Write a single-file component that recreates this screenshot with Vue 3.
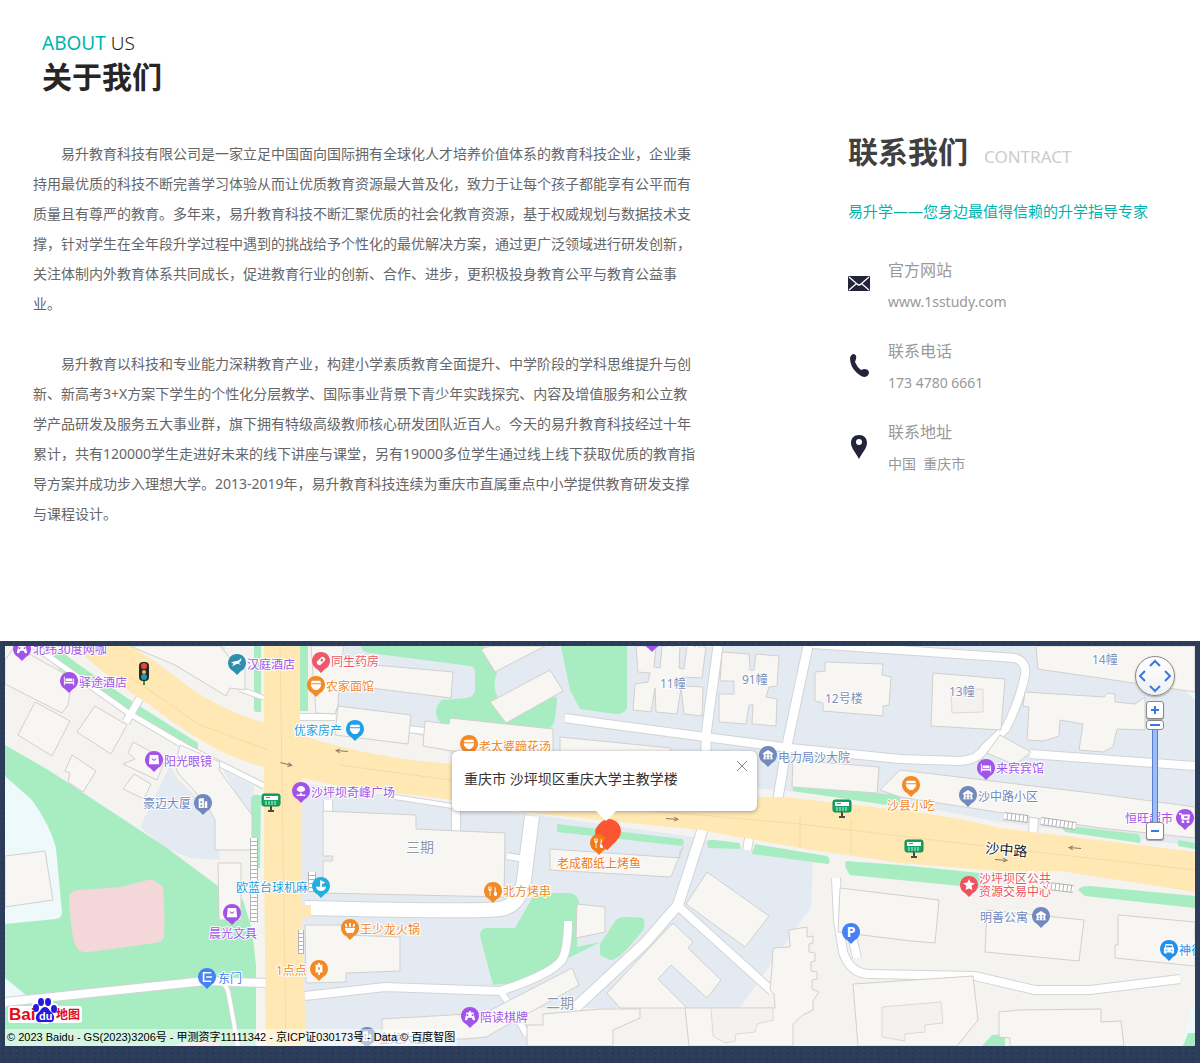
<script setup>
import { ref } from 'vue'

const zoom = ref(19)
const popupOpen = ref(true)

const contacts = [
  { icon: 'mail', label: '官方网站', value: 'www.1sstudy.com' },
  { icon: 'phone', label: '联系电话', value: '173 4780 6661' },
  { icon: 'pin', label: '联系地址', value: '中国\u00a0 重庆市' }
]

const plots = [
  'M345 646H1195V846L1100 834L1000 822L900 803L755 788H640L452 755L430 738L335 715Z',
  'M300 783L400 797L530 814L700 838L813 862L811 907L740 1008H527V1046H305L302 900Z',
  'M170 765L140 827L165 848L190 858L220 860L216 815L178 780ZM223 770L254 786V824Z',
  'M187 646H225V670L205 660Z'
]
const water = [
  'M5 777Q28 788 40 808Q55 830 56 848L62 912Q62 918 56 919L5 924Z',
  'M5 978L26 995V1008H5Z',
  'M1177 646H1195V700L1179 685ZM1195 1000Q1186 1022 1183 1046H1195Z'
]
const greens = [
  'M5 745L50 771L167 848L218 886L243 900L252 930L256 965V1046H5V1008L26 995L5 978V924L56 919Q62 918 62 912L56 848Q50 825 32 800L5 776Z',
  'M36 646H54L75 662L130 700L198 743V750L170 737L110 700L60 670Z',
  'M254 646H261V712H256Q253 711 254 705ZM251 798Q255 792 261 796L260 868H251ZM299 646H308V711H300Z',
  'M361 646Q362 652 370 653L470 666Q475 667 475 672V690Q474 697 466 698L442 700Q436 706 436 712Q436 724 450 725L550 728Q556 726 557 697L500 702Q493 690 495 680L497 672L484 655V646Z',
  'M561 646H627V708Q625 714 615 714L580 709L570 690Z',
  'M557 824L682 839Q686 843 682 846L557 832ZM707 842Q709 839 715 840L740 843V849L708 848ZM755 844L827 856Q832 860 828 864L752 854Z',
  'M793 787L900 795V807L793 791ZM1060 825L1138 834Q1142 838 1140 843L1065 832ZM1178 840L1195 843V849L1178 846Z',
  'M846 861L900 865L980 873V888L900 880L850 875Q843 866 846 861ZM1078 890Q1080 886 1090 886L1195 896V908L1085 896Z',
  'M480 936Q480 928 487 928H515L535 893H570Q578 895 579 902L577 947L600 942L565 960L515 983L493 985Z',
  'M600 944L616 920Q620 915 643 918Q646 924 643 930Q618 962 610 960L600 955Z',
  'M982 1046L992 1035L1005 1034V1046ZM1188 1033H1195V1046H1183Z'
]
const pinks = [
  'M69 897Q70 890 80 890L120 887L148 880Q152 879 156 882L163 887Q165 910 164 938Q162 942 155 943L90 952Q80 953 77 948Q71 940 69 897Z',
  'M170 1046Q190 1041 219 1041V1046Z'
]
const roads = [
  { d: 'M34 646L82 680L130 714L186 747L264 786', w: 5 },
  { d: 'M126 722L140 698', w: 7 },
  { d: 'M240 689L264 698', w: 4 },
  { d: 'M300 717H335M408 729L425 731', w: 6 },
  { d: 'M565 718L600 723L705 737L790 748L900 759L960 761Q978 760 985 748L1006 728Q1020 700 1025 675Q1027 662 1015 658L900 650L812 644', w: 8 },
  { d: 'M1030 754L1195 766', w: 8 },
  { d: 'M718 646L706 735V760', w: 9 },
  { d: 'M808 646L787 745L778 798', w: 9 },
  { d: 'M328 800V812M456 803V835', w: 8 },
  { d: 'M395 797L452 806', w: 4 },
  { d: 'M532 816L524 880Q520 906 500 909Q480 912 305 908', w: 14 },
  { d: 'M507 856L530 860', w: 6 },
  { d: 'M703 828L678 905L645 943L575 1008', w: 10 },
  { d: 'M678 906L772 991', w: 8 },
  { d: 'M305 996L385 987L500 991Q550 975 562 960Q568 948 568 921', w: 8 },
  { d: 'M500 991L510 1005L527 1035', w: 6 },
  { d: 'M836 878L838 920L843 952Q850 974 870 974L975 976L1035 990H1090L1180 979', w: 8 },
  { d: 'M853 940L857 958', w: 8 },
  { d: 'M5 1002L205 981L266 983', w: 8 },
  { d: 'M223 983Q228 988 229 996L238 1046', w: 4 },
  { d: 'M751 828L747 850M1034 815L1031 873', w: 8 }
]
const highways = [
  'M73 646Q110 680 150 705Q215 756 265 767V723Q225 712 190 688Q155 660 130 646Z',
  'M264 646H300V735Q370 758 452 764L600 790L757 797H785L900 810Q950 816 1000 828L1195 852V892L1060 871H1000L900 863L800 848L700 830L522 812L452 800L340 786L302 778V905H311V917H302L306 1046H266L264 860Z'
]
const laneLines = 'M280 646L286 1046M340 765L450 780L600 806L800 824L1000 848L1195 870M268 750L200 725L130 677M600 800V812M800 814V848M851 820V855'
const buildings = [
  'M5 660L15 646L72 678L68 705L62 713L5 684Z',
  'M35 702L70 721L52 756L18 735Z',
  'M95 706L127 725L111 754L77 732Z',
  'M72 755L96 771L83 792L68 782L70 773L65 771Z',
  'M133 742L146 749L165 760L157 780L123 764L135 759L128 753Z',
  'M134 774L151 784L144 799L123 789Z',
  'M180 745L220 762L219 770L252 815V850H215V820L207 805L178 773L175 765Z',
  'M130 646H220L235 664L245 668V690L230 688L226 696L175 665Z',
  'M5 856L45 851L53 900L5 907Z',
  'M218 863H241V920H219Z',
  'M311 646H344L341 662L453 672L451 698L339 684L338 705L335 714L316 713Z',
  'M338 706L411 715L408 744L335 735Z',
  'M425 721L449 724L450 718L553 729V755L452 751L423 746Z',
  'M481 649L490 646H545L495 672Z',
  'M490 702L550 670L563 691L506 723Z',
  'M560 737L671 748V755H560Z',
  'M636 646L638 672L650 673L648 682L635 684L633 710L651 712L655 688L656 712L677 714L681 688L684 714L702 716L703 687L684 686L682 677L702 678L706 647L687 646L684 669L679 668L680 646H662L660 668L654 667L656 646Z',
  'M722 652L749 654L750 670H754L756 654L779 656L777 686L769 687L766 697L777 699L776 726L752 724L753 705H749L746 724L719 722V694H734V681H720Z',
  'M825 662L883 664L882 675L891 677L889 705L883 706V716L823 711V703L815 701V672L825 671Z',
  'M933 673L1005 679L1001 730L931 726Z',
  'M1036 646H1195V692L1038 669Z',
  'M1025 692L1104 697L1108 693L1115 694V702L1135 704L1145 697V730L1117 729L1113 747L1103 752L1079 750L1083 724L1060 720L1059 736L1044 741L1027 740L1029 707L1023 706Z',
  'M1000 735L1031 752L1015 765L987 753Z',
  'M900 770L1100 794L1195 807V838L1100 828L900 797L880 790Z',
  'M793 760L879 767L877 793L792 787Z',
  'M323 811L416 815V829L505 833L504 897L323 893V861H332L333 856H323Z',
  'M305 925H344V935L400 937V971L346 973V982L306 983Z',
  'M382 1019L485 1013L572 968L579 985L486 1037L465 1039H382Z',
  'M550 849L680 858V852L683 847L671 877L550 870Z',
  'M577 904L605 907V932L576 938Z',
  'M707 872L769 916L745 947L686 904Z',
  'M673 923L693 942L688 948L721 980L707 998L671 965L658 979L687 1008H620L607 993Z',
  'M527 1025H543V1014L600 1009H640V1018L613 1030V1046H527Z',
  'M685 1008H775L774 994L770 990L772 968L773 948L790 947L789 930L807 927V937L813 936V943L809 944V952L815 953V961L811 962V971L817 972V979L812 980V989L819 992L813 1001V1010L803 1015L793 1024V1046H689Z',
  'M840 888L939 900L935 943L911 941L838 932Z',
  'M853 984L973 976L978 1020L957 1046H858Z',
  'M987 910L1084 920L1079 961L985 952Z',
  'M1118 915L1195 922V966L1115 958V945H1118Z',
  'M999 1012L1020 1010L1101 1009V1022L1121 1021L1124 1046H1010V1038L999 1037Z'
]
const innerBuildings = [
  'M711 1008H773V1020L757 1024L755 1032L736 1034L735 1041L725 1043L713 1036Z',
  'M882 1007L941 1002L943 1023L925 1025V1032L905 1034V1041L882 1037Z',
  'M951 690L983 689V712L952 713Z'
]
const ladders = [
  { x1: 254, y1: 838, x2: 254, y2: 922, w: 8 },
  { x1: 301, y1: 930, x2: 301, y2: 954, w: 6 },
  { x1: 1004, y1: 816, x2: 1028, y2: 819, w: 8 },
  { x1: 1041, y1: 821, x2: 1076, y2: 826, w: 8 },
  { x1: 1040, y1: 885, x2: 1073, y2: 889, w: 8 },
  { x1: 312, y1: 872, x2: 312, y2: 892, w: 8 }
]

const purple = '#a354e8'
const orange = '#f28a26'
const slate = '#7189bd'
const pins = [
  { x: 22, y: 649, c: purple, g: 'game', t: '北纬30度网咖', tx: 33, ty: 650 },
  { x: 69, y: 681, c: purple, g: 'bed', t: '驿途酒店', tx: 79, ty: 683 },
  { x: 237, y: 663, c: '#2b8fad', g: 'deer', t: '汉庭酒店', tx: 247, ty: 665, tc: purple },
  { x: 321, y: 661, c: '#ee5967', g: 'pill', t: '同生药房', tx: 331, ty: 662 },
  { x: 316, y: 685, c: orange, g: 'bowl', t: '农家面馆', tx: 326, ty: 687 },
  { x: 355, y: 729, c: '#229fe8', g: 'bowl', t: '优家房产', tx: 294, ty: 731 },
  { x: 154, y: 760, c: purple, g: 'bag', t: '阳光眼镜', tx: 164, ty: 762 },
  { x: 203, y: 803, c: slate, g: 'tower', t: '豪迈大厦', tx: 143, ty: 804 },
  { x: 301, y: 791, c: purple, g: 'mic', t: '沙坪坝奇峰广场', tx: 311, ty: 793 },
  { x: 469, y: 744, c: orange, g: 'bowl', t: '老太婆蹄花汤', tx: 479, ty: 747 },
  { x: 652, y: 640, c: purple, g: 'bag', t: '中浪宿舍', tx: 663, ty: 641 },
  { x: 768, y: 755, c: slate, g: 'house', t: '电力局沙大院', tx: 778, ty: 758 },
  { x: 911, y: 785, c: orange, g: 'bowl', t: '沙县小吃', tx: 887, ty: 806 },
  { x: 986, y: 768, c: purple, g: 'bed', t: '来宾宾馆', tx: 996, ty: 769 },
  { x: 968, y: 795, c: slate, g: 'house', t: '沙中路小区', tx: 978, ty: 797 },
  { x: 1185, y: 818, c: purple, g: 'cart', t: '恒旺超市', tx: 1125, ty: 819 },
  { x: 321, y: 886, c: '#23aee0', g: 'boat', t: '欧蓝台球机麻', tx: 236, ty: 888, tc: '#1d9fe0' },
  { x: 232, y: 913, c: purple, g: 'bag', t: '晨光文具', tx: 209, ty: 934 },
  { x: 207, y: 977, c: '#4482f5', g: 'door', t: '东门', tx: 218, ty: 979 },
  { x: 350, y: 928, c: orange, g: 'pot', t: '王少龙火锅', tx: 360, ty: 930 },
  { x: 319, y: 969, c: orange, g: 'tea', t: '1点点', tx: 276, ty: 971 },
  { x: 493, y: 891, c: orange, g: 'fork', t: '北方烤串', tx: 503, ty: 892 },
  { x: 599, y: 843, c: '#f27a18', g: 'fork', t: '老成都纸上烤鱼', tx: 557, ty: 864 },
  { x: 470, y: 1016, c: purple, g: 'game', t: '陪读棋牌', tx: 480, ty: 1018 },
  { x: 367, y: 1036, c: slate, g: 'tower', t: '金龙大厦', tx: 378, ty: 1039 },
  { x: 851, y: 932, c: '#4482f5', g: 'park' },
  { x: 969, y: 885, c: '#f0525f', g: 'star', t: '沙坪坝区公共', tx: 979, ty: 879, t2: '资源交易中心' },
  { x: 1041, y: 916, c: slate, g: 'house', t: '明善公寓', tx: 980, ty: 918 },
  { x: 1169, y: 949, c: '#2191ef', g: 'car', t: '神行', tx: 1179, ty: 951 }
]
const glyphs = {
  game: 'M-4-4H-1V-6H1V-4H4L6 4Q5 6 3 4L2 2H-2L-3 4Q-5 6-6 4ZM-4-2V0H-2V-2ZM2-2V0H4V-2Z',
  bed: 'M-6-5H-5V1H5V-3H6V5H5V3H-5V5H-6ZM-4-3H4V0H-4Z',
  deer: 'M-7-1L-2-2L2-3L5-6L5-3L2 0L5 2L0 1L-6 4L-4 1Z',
  pill: 'M-5 1L1-5Q5-5 5-1L-1 5Q-5 5-5 1ZM-1-1L1 1L3-1L1-3Z',
  bowl: 'M-5-5H5L6-2H-6ZM-6-1H6V1Q5 4 2 6H-2Q-5 4-6 1Z',
  bag: 'M-5-6H5L6 5H-6ZM-3-2Q0 4 3-2L2-2Q0 1-2-2Z',
  tower: 'M-5 6V-5L1-6V6ZM2 6V-2H5V6ZM-3-2V0H-1V-2ZM-3 2V4H-1V2Z',
  house: 'M-6-2L0-6L6-2V-1H5V4H6V5H-6V4H-5V-1H-6ZM-3-1V1H-1V-1ZM1-1V1H3V-1ZM-3 2V4H-1V2ZM1 2V4H3V2Z',
  mic: 'M-5-1A5 5 0 0 1 5-1L2 1H-2ZM-1 2H1V4H5V6H-5V4H-1Z',
  cart: 'M-7-6H-4L-4-4H6L5 2H-4L-5-4H-7ZM-4 3H-1V6H-4ZM2 3H5V6H2ZM-1-2V0H3V-2Z',
  boat: 'M-1-7L5-4L1-2V1H6Q5 6 0 6T-6 1H-1Z',
  door: 'M-5-6H5V-4H-3V4H5V6H-5ZM-1-1H6V1H-1Z',
  pot: 'M-6 0H6Q5 5 3 6H-3Q-5 5-6 0ZM-6-5H-4L-3-1H-5ZM-1-6H1V-1H-1ZM4-5H6L5-1H3Z',
  tea: 'M-1-7H1V-5H4V4H1V7H-1V4H-4V-5H-1ZM-1-2V1H1V-2Z',
  fork: 'M-6-5H-5V-2H-4V-6H-3V-2H-2V-5H-1Q-1-1-3 0V6H-4V0Q-6-1-6-5ZM2-6Q4-3 3 0Q6 3 4 6H2Q0 3 2 0Z',
  star: 'M0-7L2-3L7-2L3 1L4 6L0 4L-4 6L-3 1L-7-2L-2-3Z',
  car: 'M-4-6H4L5-2L6-1V5H4V6H3V4H-3V6H-4V5H-6V-1L-5-2ZM-3-4L-4-2H4L3-4ZM-4 1V2H-2V1ZM2 1V2H4V1Z'
}
const names = [
  { t: '11幢', x: 660, y: 684 },
  { t: '91幢', x: 742, y: 680 },
  { t: '12号楼', x: 825, y: 699 },
  { t: '13幢', x: 949, y: 692 },
  { t: '14幢', x: 1092, y: 660 }
]
const signs = [[271, 801], [842, 807], [914, 847]]
const arrows = [
  { x: 286, y: 764, r: 15 }, { x: 342, y: 751, r: 184 }, { x: 672, y: 819, r: 4 },
  { x: 1075, y: 848, r: 184 }, { x: 1001, y: 860, r: 4 }
]
</script>

<template>
  <div class="page">
    <main class="intro">
      <section class="about">
        <header class="about-head">
          <p class="eyebrow"><span>ABOUT</span> US</p>
          <h1>关于我们</h1>
        </header>
        <p class="copy">易升教育科技有限公司是一家立足中国面向国际拥有全球化人才培养价值体系的教育科技企业，企业秉持用最优质的科技不断完善学习体验从而让优质教育资源最大普及化，致力于让每个孩子都能享有公平而有质量且有尊严的教育。多年来，易升教育科技不断汇聚优质的社会化教育资源，基于权威规划与数据技术支撑，针对学生在全年段升学过程中遇到的挑战给予个性化的最优解决方案，通过更广泛领域进行研发创新，关注体制内外教育体系共同成长，促进教育行业的创新、合作、进步，更积极投身教育公平与教育公益事业。</p>
        <p class="copy">易升教育以科技和专业能力深耕教育产业，构建小学素质教育全面提升、中学阶段的学科思维提升与创新、新高考3+X方案下学生的个性化分层教学、国际事业背景下青少年实践探究、内容及增值服务和公立教学产品研发及服务五大事业群，旗下拥有特级高级教师核心研发团队近百人。今天的易升教育科技经过十年累计，共有120000学生走进好未来的线下讲座与课堂，另有19000多位学生通过线上线下获取优质的教育指导方案并成功步入理想大学。2013-2019年，易升教育科技连续为重庆市直属重点中小学提供教育研发支撑与课程设计。</p>
      </section>

      <aside class="contact">
        <div class="contact-head">
          <h2>联系我们</h2>
          <span>CONTRACT</span>
        </div>
        <p class="slogan">易升学——您身边最值得信赖的升学指导专家</p>
        <ul class="contact-list">
          <li v-for="c in contacts" :key="c.label">
            <svg v-if="c.icon === 'mail'" class="contact-icon" viewBox="0 0 22 24">
              <rect y="3" width="22" height="15" rx="1" fill="#23233b" />
              <path d="M1 4L9 11Q11 13 13 11L21 4M1 17L8 11M21 17L14 11" fill="none" stroke="#fff" stroke-width="1.3" />
            </svg>
            <svg v-else-if="c.icon === 'phone'" class="contact-icon" viewBox="0 0 22 24">
              <path d="M2 4Q3 0 6 0Q9 1 8 5L7 8Q9 13 13 16L16 15Q20 15 21 18Q21 22 17 23Q13 23 8 18Q2 12 2 4Z" fill="#23233b" />
            </svg>
            <svg v-else class="contact-icon" viewBox="0 0 22 24">
              <path d="M11 0C6 0 3 3 3 8C3 13 8 18 11 24C14 18 19 13 19 8C19 3 16 0 11 0Z" fill="#23233b" />
              <circle cx="11" cy="7" r="3" fill="#fff" />
            </svg>
            <div>
              <p class="label">{{ c.label }}</p>
              <p class="value">{{ c.value }}</p>
            </div>
          </li>
        </ul>
      </aside>
    </main>

    <section class="map-band">
      <div class="map">
        <svg class="canvas" viewBox="5 646 1190 400" preserveAspectRatio="xMidYMid slice">
          <rect x="5" y="646" width="1190" height="400" fill="#f4f3f0" />
          <path v-for="d in plots" :key="d" :d="d" fill="#e4eaf1" />
          <path v-for="d in water" :key="d" :d="d" fill="#edf9fb" />
          <path v-for="d in greens" :key="d" :d="d" fill="#a8edc1" />
          <path v-for="d in pinks" :key="d" :d="d" fill="#f4d7d8" />
          <g fill="none" stroke="#d2d4d6">
            <path v-for="r in roads" :key="r.d" :d="r.d" :stroke-width="r.w + 2" />
          </g>
          <g fill="none" stroke="#fff">
            <path v-for="r in roads" :key="r.d" :d="r.d" :stroke-width="r.w" />
          </g>
          <path v-for="d in highways" :key="d" :d="d" fill="#ffe8b4" />
          <path :d="laneLines" fill="none" stroke="#f6daa6" />
          <g fill="#f8f6f3" stroke="#d2d0cd">
            <path v-for="d in buildings" :key="d" :d="d" />
          </g>
          <g fill="#f3f2ef" stroke="#dcdad6">
            <path v-for="d in innerBuildings" :key="d" :d="d" />
          </g>
          <g v-for="l in ladders" :key="l.x1 + '-' + l.y1">
            <line :x1="l.x1" :y1="l.y1" :x2="l.x2" :y2="l.y2" stroke="#b4b4b4" :stroke-width="l.w" />
            <line :x1="l.x1" :y1="l.y1" :x2="l.x2" :y2="l.y2" stroke="#fff" :stroke-width="l.w - 2" stroke-dasharray="3 1" />
          </g>

          <path v-for="a in arrows" :key="a.x" d="M-6 0H6M2-2L6 0L2 2" :transform="`translate(${a.x} ${a.y}) rotate(${a.r})`" fill="none" stroke="#8b7d63" />

          <g transform="translate(144 672)">
            <path d="M0 8V13" stroke="#3b8b43" stroke-width="2" />
            <rect x="-5" y="-10" width="10" height="19" rx="4" fill="#252a2d" />
            <circle cy="-6" r="3" fill="#e9433c" /><circle r="2" fill="#f5b163" /><circle cy="5" r="3" fill="#1c9aa0" />
          </g>
          <g v-for="s in signs" :key="s[0]" :transform="`translate(${s[0]} ${s[1]})`">
            <path d="M0 4V10M-3 10H3" stroke="#454c48" stroke-width="2" />
            <rect x="-9" y="-7" width="18" height="12" rx="2" fill="#13a466" stroke="#0a8a50" />
            <rect x="-7" y="-5" width="14" height="4" fill="#fff" /><rect x="-5" y="-4" width="4" height="1" fill="#e44" />
            <path d="M-5 0V4M-2 0V4M1 0V4M4 0V4" stroke="#c9f3df" />
          </g>

          <g class="names">
            <text v-for="n in names" :key="n.t" :x="n.x" :y="n.y + 4">{{ n.t }}</text>
            <text class="phase" x="406" y="852">三期</text>
            <text class="phase" x="546" y="1008">二期</text>
            <text class="street" x="985" y="853" transform="rotate(5 985 853)">沙中路</text>
          </g>

          <path d="M607 850L597 840A12 12 0 1 1 617 840Z" fill="#fb5531" />

          <g v-for="p in pins" :key="p.x + '-' + p.y">
            <g :transform="`translate(${p.x} ${p.y})`">
              <path d="M0 12L-4 8A9 9 0 1 1 4 8Z" :fill="p.c" />
              <text v-if="p.g === 'park'" class="park" y="5">P</text>
              <path v-else :d="glyphs[p.g]" fill="#fff" fill-rule="evenodd" transform="scale(.85)" />
            </g>
            <text v-if="p.t" class="poi" :x="p.tx" :y="p.ty + 4" :fill="p.tc || p.c">{{ p.t }}</text>
            <text v-if="p.t2" class="poi" :x="p.tx" :y="p.ty + 17" :fill="p.c">{{ p.t2 }}</text>
          </g>

          <path d="M607 850L601 844L606 838L597 832A12 12 0 1 1 617 840Z" fill="#fb5531" />
        </svg>

        <div v-if="popupOpen" class="popup">
          <p>重庆市 沙坪坝区重庆大学主教学楼</p>
          <button type="button" aria-label="关闭" @click="popupOpen = false">
            <svg viewBox="0 0 10 10"><path d="M0 0L10 10M10 0L0 10" stroke="#888" /></svg>
          </button>
        </div>

        <div class="controls">
          <div class="pan">
            <button type="button" class="up" aria-label="向上"><svg viewBox="0 0 12 12"><path d="M1 8L6 3L11 8" /></svg></button>
            <button type="button" class="left" aria-label="向左"><svg viewBox="0 0 12 12"><path d="M8 1L3 6L8 11" /></svg></button>
            <button type="button" class="right" aria-label="向右"><svg viewBox="0 0 12 12"><path d="M4 1L9 6L4 11" /></svg></button>
            <button type="button" class="down" aria-label="向下"><svg viewBox="0 0 12 12"><path d="M1 4L6 9L11 4" /></svg></button>
          </div>
          <button type="button" class="step" aria-label="放大" @click="zoom = Math.min(19, +zoom + 1)">
            <svg viewBox="0 0 12 12"><path d="M2 6H10M6 2V10" /></svg>
          </button>
          <input v-model="zoom" class="slider" type="range" min="3" max="19" aria-label="缩放级别">
          <button type="button" class="step" aria-label="缩小" @click="zoom = Math.max(3, +zoom - 1)">
            <svg viewBox="0 0 12 12"><path d="M2 6H10" /></svg>
          </button>
        </div>

        <div class="map-foot">
          <svg class="logo" viewBox="0 0 76 30">
            <g fill="#fff" stroke="#fff" stroke-width="4" stroke-linejoin="round">
              <rect x="2" y="13" width="70" height="13" rx="1" />
              <ellipse cx="37" cy="20" rx="9" ry="7" />
              <ellipse cx="33" cy="7" rx="3" ry="4" /><ellipse cx="40" cy="7" rx="3" ry="4" />
              <ellipse cx="28" cy="13" rx="3" ry="4" /><ellipse cx="46" cy="14" rx="3" ry="4" />
            </g>
            <text x="1" y="25" class="logo-latin" fill="#e10b16">Bai</text>
            <text x="48" y="24" class="logo-cjk" fill="#e10b16">地图</text>
            <g fill="#2419dc">
              <path d="M37 12Q40 12 42 16Q47 20 46 24Q45 28 41 27H33Q29 28 28 24Q27 20 32 16Q34 12 37 12Z" />
              <ellipse cx="33" cy="7" rx="3" ry="4" /><ellipse cx="40" cy="7" rx="3" ry="4" />
              <ellipse cx="28" cy="13" rx="3" ry="4" /><ellipse cx="46" cy="14" rx="3" ry="4" />
            </g>
            <text x="31" y="25" class="logo-du" fill="#fff">du</text>
          </svg>
          <p class="credit">© 2023 Baidu - GS(2023)3206号 - 甲测资字11111342 - 京ICP证030173号 - Data © 百度智图</p>
        </div>
      </div>
    </section>
  </div>
</template>

<style>
body { background: #fff; }
</style>

<style scoped>
.page { font-family: "Noto Sans", "Noto Sans CJK SC", sans-serif; color: #666; }
h1, h2, p, ul { margin: 0; padding: 0; }
button { padding: 0; cursor: pointer; }

.intro { display: flex; justify-content: space-between; padding: 28px 32px 112px 33px; }
.about { flex: 0 1 668px; }
.about-head { padding-left: 9px; margin-bottom: 44px; }
.eyebrow { font-size: 19px; line-height: 30px; color: #222; font-weight: 300; }
.eyebrow span { color: #00b3ae; font-weight: 400; }
h1 { font-size: 30px; line-height: 37px; color: #262626; }
.copy { font-size: 14px; line-height: 30px; text-indent: 28px; margin-bottom: 30px; }
.copy:last-child { margin-bottom: 0; }

.contact { flex: 0 0 320px; padding-top: 104px; }
.contact-head { display: flex; align-items: baseline; gap: 16px; }
h2 { font-size: 30px; line-height: 40px; color: #404040; }
.contact-head span { font-size: 17px; line-height: 20px; color: #ccc; }
.slogan { font-size: 15px; line-height: 30px; margin: 24px 0 28px; color: #00b3ae; white-space: nowrap; }
.contact-list { list-style: none; display: grid; gap: 17px; }
.contact-list li { display: flex; align-items: center; gap: 18px; color: #999; }
.contact-icon { width: 22px; height: 24px; margin-bottom: 2px; }
.label { font-size: 16px; line-height: 32px; }
.value { font-size: 14px; line-height: 32px; }

.map-band {
  padding: 5px 5px 17px;
  background-color: #2d3e5c;
  background-image:
    radial-gradient(circle, #4a5d7a 1px, transparent 1px),
    radial-gradient(circle, #293955 1px, transparent 2px),
    radial-gradient(circle, #354765 1px, transparent 1px);
  background-size: 37px 23px, 7px 5px, 11px 13px;
}
.map { position: relative; height: 400px; overflow: hidden; }
.canvas { display: block; width: 100%; height: 100%; }
.poi, .names text { font-size: 12px; paint-order: stroke; stroke: #fff; stroke-width: 2px; stroke-linejoin: round; }
.names text { fill: #7d90b8; }
.names .phase { font-size: 14px; fill: #8a98a8; }
.names .street { font-size: 14px; fill: #222; }
.park { font-size: 14px; font-weight: 700; fill: #fff; text-anchor: middle; }

.popup {
  position: absolute; left: calc(50% - 148px); top: 105px; width: 305px; height: 60px;
  box-sizing: border-box; padding: 12px; border-radius: 6px; background: #fff;
  box-shadow: 0 1px 4px rgba(0, 0, 0, .35);
}
.popup::after {
  content: ""; position: absolute; left: 144px; top: 60px;
  border: 10px solid transparent; border-top-color: #fff; border-bottom: 0;
}
.popup p { font-size: 14px; line-height: 32px; color: #333; white-space: nowrap; }
.popup button { position: absolute; top: 10px; right: 10px; width: 10px; height: 10px; border: 0; background: none; }
.popup svg { display: block; width: 10px; height: 10px; }

.controls { position: absolute; top: 10px; right: 20px; width: 40px; display: flex; flex-direction: column; align-items: center; }
.controls svg { display: block; width: 12px; height: 12px; fill: none; stroke: #3d76e0; stroke-width: 2; }
.pan {
  width: 40px; height: 40px; box-sizing: border-box; padding: 1px; margin-bottom: 5px;
  display: grid; grid-template: repeat(3, 12px) / repeat(3, 12px);
  border: 1px solid #888; border-radius: 50%; background: linear-gradient(#fff, #f0f0f0); box-shadow: 0 1px 2px rgba(0, 0, 0, .3);
}
.pan button { border: 0; background: none; }
.up { grid-area: 1 / 2; } .left { grid-area: 2 / 1; } .right { grid-area: 2 / 3; } .down { grid-area: 3 / 2; }
.step {
  width: 18px; height: 18px; box-sizing: border-box; display: grid; place-items: center;
  border: 1px solid #888; border-radius: 3px; background: #fff; box-shadow: 0 1px 1px rgba(0, 0, 0, .3);
}
.slider {
  appearance: none; writing-mode: vertical-lr; direction: rtl; width: 18px; height: 102px; margin: 1px 0 0;
  background: linear-gradient(90deg, #5b7ed0 1px, #9dbcfb 1px, #9dbcfb 5px, #5b7ed0 5px) center / 6px 100% no-repeat;
}
.slider::-webkit-slider-thumb {
  appearance: none; width: 18px; height: 10px; border: 1px solid #888; border-radius: 3px; box-sizing: border-box;
  background: linear-gradient(#3d76e0, #3d76e0) center / 10px 2px no-repeat, #fff;
}

.map-foot { position: absolute; left: 0; bottom: 0; }
.logo { display: block; width: 76px; height: 30px; margin-left: 3px; margin-bottom: 4px; overflow: visible; }
.logo-latin { font: 700 17px "Liberation Sans", sans-serif; }
.logo-cjk { font: 700 12px "Noto Sans CJK SC", sans-serif; }
.logo-du { font: 700 11px "Liberation Sans", sans-serif; }
.credit {
  padding: 0 2px; font: 11px/17px "Liberation Sans", "Noto Sans CJK SC", sans-serif; color: #000;
  background: rgba(255, 255, 255, .5); white-space: nowrap;
}
</style>
